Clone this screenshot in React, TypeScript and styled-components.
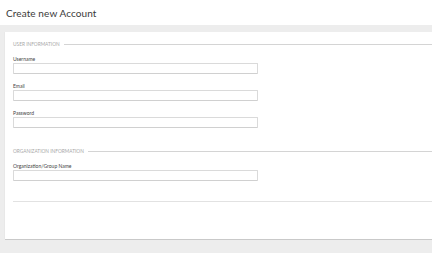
import React from "react";
import styled, { createGlobalStyle } from "styled-components";

const GlobalStyle = createGlobalStyle`
  html, body {
    margin: 0;
    padding: 0;
    background: #ededed;
    font-family: Lato, "Open Sans", "Liberation Sans", sans-serif;
    overflow: hidden;
  }
`;

const Page = styled.div`
  width: 432px;
  height: 253px;
  display: flex;
  flex-direction: column;
  background: #ededed;
`;

const Header = styled.header`
  height: 25px;
  background: #fff;
  display: flex;
  align-items: center;
  padding-left: 6px;
`;

const Title = styled.h1`
  margin: 0;
  font-size: 10px;
  font-weight: 400;
  color: #3a3a3a;
  letter-spacing: 0.1px;
`;

const Main = styled.main`
  padding: 7px 0 0 5px;
`;

const Card = styled.div`
  height: 207px;
  background: #fff;
  box-shadow: 0 1px 0 #c9c9c9, -0.5px 0 0 #e4e4e4;
  padding: 9px 0 0 8px;
  box-sizing: border-box;
  display: flex;
  flex-direction: column;
`;

// flex column: margins don't collapse, so the gaps add up
const Section = styled.section<{ $gap?: number }>`
  margin-top: ${({ $gap }) => $gap ?? 0}px;
  display: flex;
  flex-direction: column;
`;

const Legend = styled.div`
  display: flex;
  align-items: center;
  gap: 4px;
  height: 6px;
  margin-bottom: 9px;
  font-size: 4.8px;
  line-height: 6px;
  color: #a8a8a8;
  text-transform: uppercase;
  white-space: nowrap;

  &::after {
    content: "";
    flex: 1;
    height: 1px;
    background: #d4d4d4;
  }
`;

const Field = styled.div`
  margin-bottom: 9px;
`;

const Label = styled.label`
  display: block;
  font-size: 5px;
  line-height: 6px;
  margin-bottom: 1px;
  color: #444;
`;

const Input = styled.input`
  display: block;
  width: 245px;
  height: 11px;
  box-sizing: border-box;
  margin: 0;
  padding: 0 2px;
  border: 1px solid #dadada;
  border-bottom-color: #d0d0d0;
  border-radius: 1px;
  background: #fff;
  font-size: 5px;
  outline: none;
`;

const Divider = styled.hr`
  margin: 11px 0 0;
  border: 0;
  height: 1px;
  width: 100%;
  background: #e2e2e2;
`;

const App = () => {
  return (
    <Page>
      <GlobalStyle />
      <Header>
        <Title>Create new Account</Title>
      </Header>
      <Main>
        <Card>
          <Section>
            <Legend>User Information</Legend>
            <Field>
              <Label>Username</Label>
              <Input type="text" />
            </Field>
            <Field>
              <Label>Email</Label>
              <Input type="email" />
            </Field>
            <Field>
              <Label>Password</Label>
              <Input type="password" />
            </Field>
          </Section>
          <Section $gap={11}>
            <Legend>Organization Information</Legend>
            <Field>
              <Label>Organization/Group Name</Label>
              <Input type="text" />
            </Field>
          </Section>
          <Divider />
        </Card>
      </Main>
    </Page>
  );
};

export default App;
